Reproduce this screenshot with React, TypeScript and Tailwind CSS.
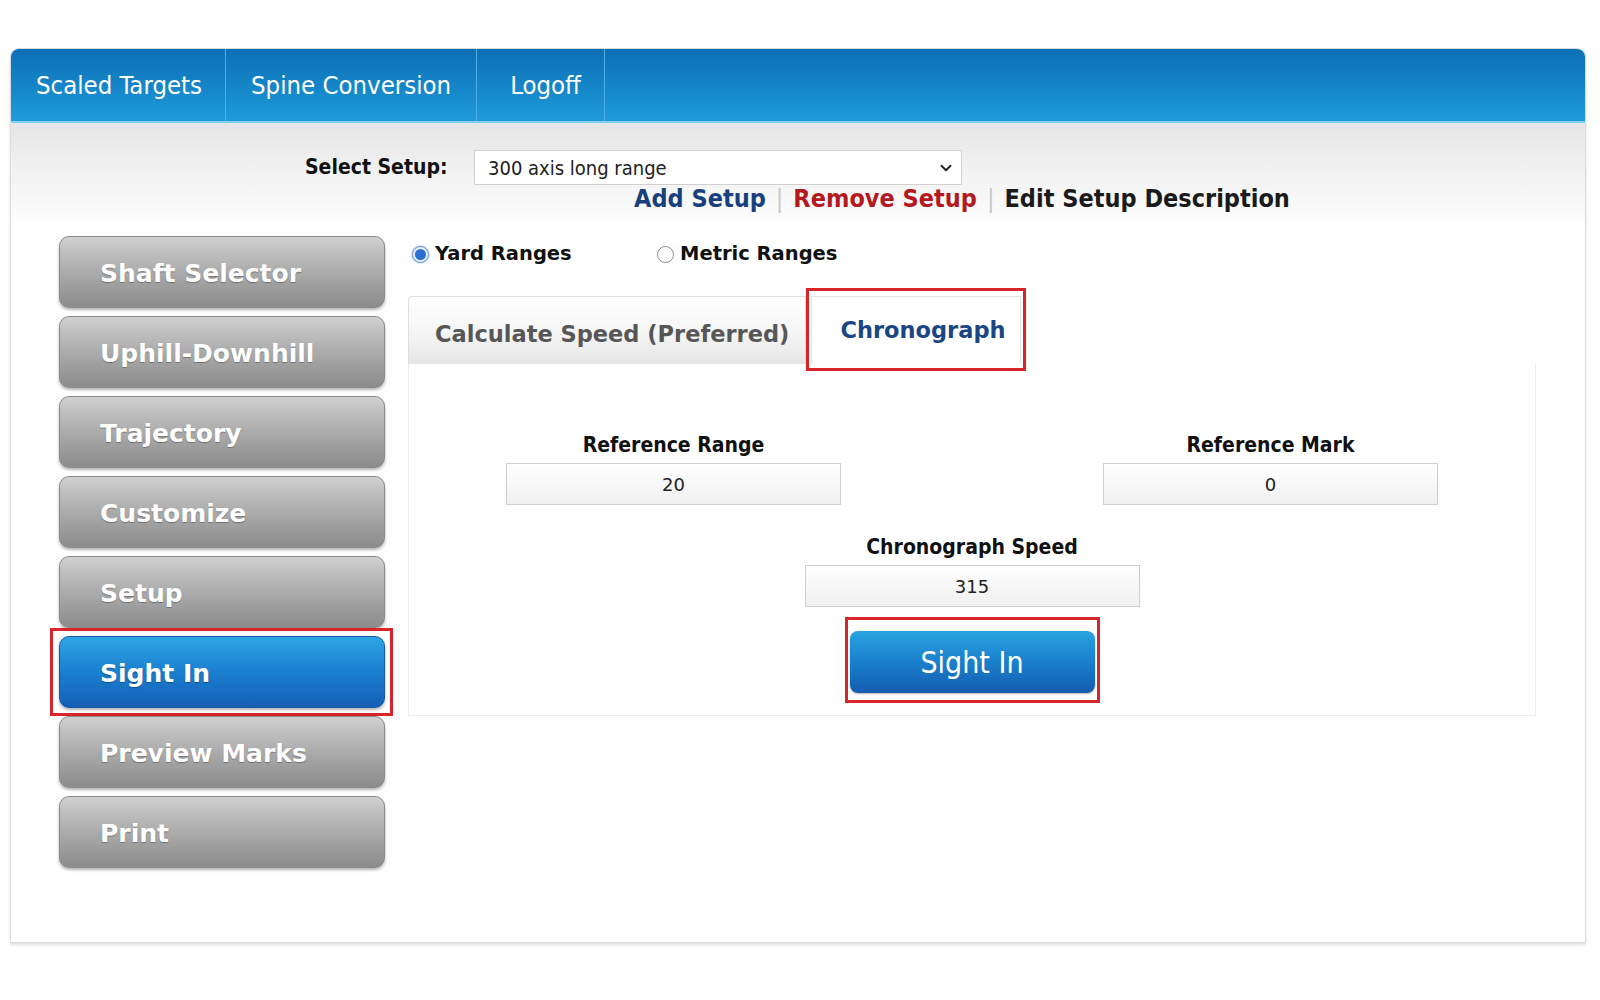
import React from "react";
import { ChevronDown } from "lucide-react";

const verdana = "font-['DejaVu_Sans',Verdana,sans-serif]";
const tahoma = "font-['DejaVu_Sans_Condensed','DejaVu_Sans',Tahoma,sans-serif]";

const sideItems = [
  "Shaft Selector",
  "Uphill-Downhill",
  "Trajectory",
  "Customize",
  "Setup",
  "Sight In",
  "Preview Marks",
  "Print",
];

function SideButton({ label, active }: { label: string; active?: boolean }) {
  if (active) {
    return (
      <div className="relative">
        <button className="w-[326px] h-[72px] rounded-[10px] border border-[#1659a8] bg-gradient-to-b from-[#2ea6e4] via-[#1a7fd0] to-[#1560b6] text-left pl-[40px] pt-[4px] text-white text-[25px] font-bold [text-shadow:0_1px_1px_rgba(0,0,0,0.35)] shadow-[0_2px_3px_rgba(0,0,0,0.3)]">
          {label}
        </button>
        <span className="absolute -left-[9px] -right-[8px] -top-[8px] -bottom-[8px] border-[3px] border-[#d6262c] pointer-events-none" />
      </div>
    );
  }
  return (
    <button className="w-[326px] h-[72px] rounded-[10px] border border-[#8a8a8a] bg-gradient-to-b from-[#d0d0d0] via-[#ababab] to-[#8c8c8c] text-left pl-[40px] pt-[4px] text-white text-[25px] font-bold [text-shadow:0_1px_1px_rgba(0,0,0,0.3)] shadow-[0_2px_3px_rgba(0,0,0,0.3)]">
      {label}
    </button>
  );
}

function Field({ label, value }: { label: string; value: string }) {
  return (
    <div className="flex flex-col items-center w-[335px]">
      <div className={`${tahoma} text-[21px] leading-[26px] font-bold text-[#111] mb-[5px]`}>{label}</div>
      <div className="w-[335px] h-[42px] border border-[#cfcfcf] bg-gradient-to-b from-white to-[#f0f0f0] flex items-center justify-center text-[18px] text-[#222]">
        {value}
      </div>
    </div>
  );
}

export default function App() {
  return (
    <div className={`${verdana} bg-white w-[1600px] h-[1000px] pt-[48px] px-[10px]`}>
      <div className="w-[1576px] h-[895px] border border-[#dcdcdc] rounded-t-[8px] shadow-[0_2px_3px_rgba(0,0,0,0.12)] flex flex-col">
        {/* top nav */}
        <div className="h-[74px] rounded-t-[8px] bg-gradient-to-b from-[#0c6fb4] to-[#1e9bdb] border-b-2 border-[#7fd0f2] flex items-stretch">
          {["Scaled Targets", "Spine Conversion", "Logoff"].map((t, i) => (
            <div
              key={t}
              className={`${tahoma} h-full flex items-center text-white text-[25.5px] border-r border-[#52aee0] ${
                i === 0 ? "pl-[25px] pr-[23px]" : i === 1 ? "px-[25px]" : "pl-[33px] pr-[23px]"
              }`}
            >
              {t}
            </div>
          ))}
        </div>

        {/* setup selector */}
        <div className="bg-gradient-to-b from-[#e6e6e6] to-white pb-[16px]">
          <div className="flex items-center pl-[294px] pt-[27px]">
            <span className={`${tahoma} text-[21px] font-bold text-[#111] w-[169px]`}>Select Setup:</span>
            <div className="w-[488px] h-[35px] bg-white border border-[#d0d0d0] flex items-center justify-between pl-[13px] pr-[6px]">
              <span className={`${tahoma} text-[20px] text-[#222]`}>300 axis long range</span>
              <ChevronDown className="w-[18px] h-[18px] text-[#222]" strokeWidth={2.5} />
            </div>
          </div>
          <div className={`${tahoma} flex items-center pl-[623px] text-[25px] leading-[30px] font-bold -mt-[1px]`}>
            <span className="text-[#17407c]">Add Setup</span>
            <span className="text-[#c8c8c8] font-normal mx-[10px]">|</span>
            <span className="text-[#b3191e]">Remove Setup</span>
            <span className="text-[#c8c8c8] font-normal mx-[10px]">|</span>
            <span className="text-[#1a1a1a]">Edit Setup Description</span>
          </div>
        </div>

        {/* main */}
        <div className="flex pl-[48px] pt-[6px]">
          <div className="flex flex-col gap-[8px] w-[326px]">
            {sideItems.map((s) => (
              <SideButton key={s} label={s} active={s === "Sight In"} />
            ))}
          </div>

          <div className="ml-[23px] w-[1128px] flex flex-col">
            {/* radios */}
            <div className="flex items-center h-[28px] pl-[4px] mt-[4px]">
              <label className="flex items-center gap-[6px] text-[19.5px] font-bold text-[#111] w-[245px]">
                <span className="w-[17px] h-[17px] rounded-full border border-[#6a9ad0] bg-[#e8f1fb] flex items-center justify-center shadow-[0_0_2px_rgba(30,100,200,0.6)]">
                  <span className="w-[11px] h-[11px] rounded-full bg-[#2a6fd1]" />
                </span>
                Yard Ranges
              </label>
              <label className="flex items-center gap-[6px] text-[19.5px] font-bold text-[#111]">
                <span className="w-[17px] h-[17px] rounded-full border border-[#8a8a8a] bg-white" />
                Metric Ranges
              </label>
            </div>

            {/* tabs */}
            <div className="flex items-end mt-[28px] h-[68px]">
              <div className="w-[398px] h-[68px] border border-[#dedede] border-b-0 rounded-tl-[4px] bg-gradient-to-b from-white via-[#f6f6f6] to-[#e6e6e6] flex items-center pl-[26px] pt-[9px] text-[22.5px] font-bold text-[#575757]">
                Calculate Speed (Preferred)
              </div>
              <div className="relative ml-[5px] w-[210px] h-[68px] border border-[#e4e4e4] border-b-0 bg-white flex items-start justify-center pl-[14px] pt-[17px] text-[22.5px] font-bold text-[#1b4684] z-10">
                Chronograph
                <span className="absolute -left-[6px] -right-[6px] -top-[9px] -bottom-[7px] border-[3px] border-[#d6262c] pointer-events-none" />
              </div>
            </div>

            {/* panel */}
            <div className="h-[352px] border border-[#ececec] border-t-0 bg-white flex flex-col items-center">
              <div className="w-[932px] flex justify-between pt-[68px]">
                <Field label="Reference Range" value="20" />
                <Field label="Reference Mark" value="0" />
              </div>
              <div className="mt-[29px]">
                <Field label="Chronograph Speed" value="315" />
              </div>
              <div className="mt-[10px] w-[255px] h-[86px] border-[3px] border-[#d6262c] flex items-center justify-center pt-[4px]">
                <button
                  className={`${tahoma} w-[245px] h-[62px] rounded-[8px] bg-gradient-to-b from-[#2aa3e0] via-[#1a7fcc] to-[#145db0] text-white text-[30px] shadow-[0_1px_2px_rgba(0,0,0,0.3)]`}
                >
                  Sight In
                </button>
              </div>
            </div>
          </div>
        </div>
      </div>
    </div>
  );
}
